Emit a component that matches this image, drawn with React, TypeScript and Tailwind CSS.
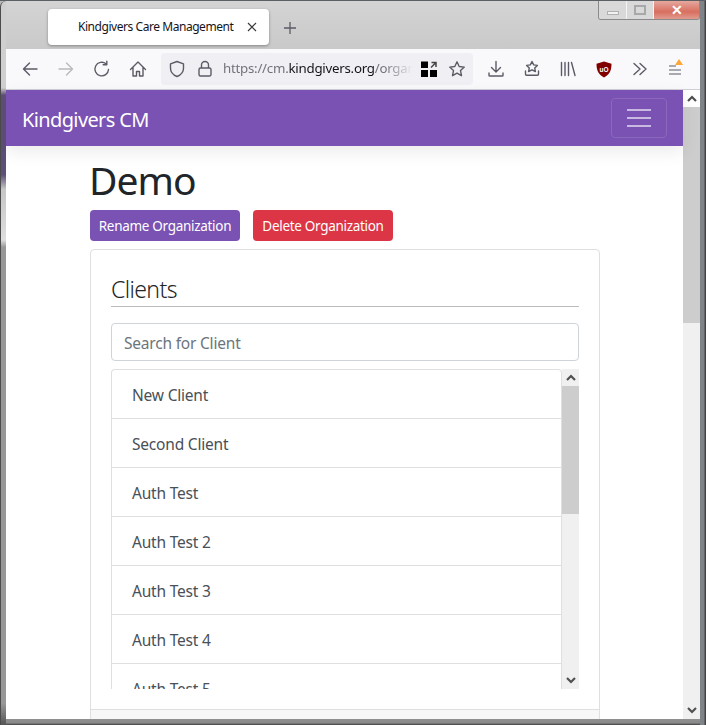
import React from "react";

const stroke = "#5b5b66";

function Ico({ children, w = 20, h = 20, vb = "0 0 20 20", c = "shrink-0" }: { children: React.ReactNode; w?: number; h?: number; vb?: string; c?: string }) {
  return (
    <svg width={w} height={h} viewBox={vb} fill="none" stroke={stroke} strokeWidth={1.4} strokeLinecap="round" strokeLinejoin="round" className={c}>
      {children}
    </svg>
  );
}

const names = ["New Client", "Second Client", "Auth Test", "Auth Test 2", "Auth Test 3", "Auth Test 4", "Auth Test 5"];

function ScrollArrow({ up }: { up: boolean }) {
  return (
    <svg width="10" height="7" viewBox="0 0 10 7" fill="none" stroke="#505050" strokeWidth={2.2}>
      <path d={up ? "M1 6 L5 2 L9 6" : "M1 1 L5 5 L9 1"} />
    </svg>
  );
}

function Toolbar() {
  return (
    <div className="h-[41px] bg-[#f9f9fb] border-b border-[#cfcfd8] flex items-center relative shrink-0">
      <div className="w-[155px] shrink-0 flex items-center">
        <div className="w-[48px] flex justify-center">
          <Ico><path d="M17 10H3.500M9.500 4l-6 6 6 6" /></Ico>
        </div>
        <div className="w-[24px] flex justify-center">
          <Ico><g stroke="#b9b9bf"><path d="M3 10h13.500M10.500 4l6 6-6 6" /></g></Ico>
        </div>
        <div className="w-[48px] flex justify-center">
          <Ico><path d="M16.500 10.500A6.800 6.800 0 1 1 14 4.800M14.800 2.200v3.600h-3.600" /></Ico>
        </div>
        <div className="w-[24px] flex justify-center">
          <Ico><path d="M2.500 10.500 10 3l7.500 7.500M5 8.500V17h3.500v-4.500h3V17H15V8.500" /></Ico>
        </div>
      </div>
      <div className="w-[312px] h-[32px] bg-[#f0f0f4] rounded flex items-center shrink-0 pl-[7px]">
        <Ico w={18} h={18} vb="0 0 18 18"><path d="M9 1.500 2.500 3.800v4.400c0 4 3 6.800 6.500 8.300 3.500-1.500 6.500-4.300 6.500-8.300V3.800L9 1.500Z" /></Ico>
        <Ico w={16} h={18} vb="0 0 16 18" c="ml-[11px] shrink-0"><path d="M4.500 8V5a3.500 3.500 0 0 1 7 0v3M3.500 8h9a1.500 1.500 0 0 1 1.500 1.500v5a1.500 1.500 0 0 1-1.500 1.500h-9A1.500 1.500 0 0 1 2 14.500v-5A1.500 1.500 0 0 1 3.500 8Z" /></Ico>
        <div className="ml-[10px] w-[190px] overflow-hidden whitespace-nowrap text-[13.300px] text-[#72727c] shrink-0 tracking-[-0.25px] [mask-image:linear-gradient(90deg,#000_85%,transparent)]">
          https://cm.<span className="text-[#15141a]">kindgivers.org</span>/organization
        </div>
        <svg width="16" height="16" viewBox="0 0 16 16" className="ml-[8px] shrink-0">
          <rect x="0" y="0.500" width="7" height="6.500" fill="#000" />
          <rect x="0" y="9" width="7" height="7" fill="#000" />
          <rect x="9" y="9" width="7" height="7" fill="#000" />
          <path d="M10 6.500 15 1.500M10.500 1.500H15V6" stroke="#444" strokeWidth="1.500" fill="none" />
        </svg>
        <Ico w={18} h={18} vb="0 0 18 18" c="ml-[11px] shrink-0"><path d="m9 1.800 2.200 4.700 5.100.6-3.800 3.500 1 5.100L9 13.200l-4.500 2.500 1-5.100-3.800-3.500 5.100-.6L9 1.800Z" /></Ico>
      </div>
      <div className="flex items-center pl-[14px] shrink-0">
        <div className="w-[36px]">
          <Ico w={18} h={18} vb="0 0 18 18"><path d="M9 1.500V11.500M4.500 7.500 9 12l4.500-4.500M2 13v2.200A.800.800 0 0 0 2.800 16h12.400a.800.800 0 0 0 .800-.800V13" /></Ico>
        </div>
        <div className="w-[36px]">
          <Ico w={18} h={18} vb="0 0 18 18"><path d="m9 1.500 1.700 3.400 3.700.500-2.700 2.500.700 3.600L9 9.800l-3.400 1.700.700-3.600L3.600 5.400l3.700-.500L9 1.500ZM2.500 11v3.200a1 1 0 0 0 1 1h11a1 1 0 0 0 1-1V11" /></Ico>
        </div>
        <div className="w-[37px]">
          <Ico w={18} h={18} vb="0 0 18 18"><path d="M2.500 2.500v13M6 2.500v13M9.500 2.500v13M12.500 2.500l3.500 13" /></Ico>
        </div>
        <div className="w-[36px]">
          <svg width="16" height="17" viewBox="0 0 16 17">
            <path d="M8 .500 15.500 2.700c0 6.500-1.800 10.800-7.500 13.800C2.300 13.500.500 9.200.500 2.700L8 .500Z" fill="#800000" />
            <text x="8" y="10.500" fontSize="6.500" fill="#fff" textAnchor="middle" fontFamily="Liberation Sans, sans-serif" fontWeight="700">uO</text>
          </svg>
        </div>
        <div className="w-[36px]">
          <Ico w={16} h={16} vb="0 0 16 16"><path d="M2 2.500 8 8l-6 5.500M8 2.500 14 8l-6 5.500" /></Ico>
        </div>
        <div className="relative w-[18px] h-[18px] -mt-[2px]">
          <svg width="14" height="12" viewBox="0 0 14 12" stroke={stroke} strokeWidth="1.100" className="absolute left-0 top-[6px]"><path d="M1 1h7M1 5h12M1 9h12" /></svg>
          <svg width="8" height="6" viewBox="0 0 8 6" className="absolute left-[7px] top-0"><path d="M4 0 8 6H0Z" fill="#ffa436" /></svg>
        </div>
      </div>
    </div>
  );
}

export default function App() {
  return (
    <div className="w-[706px] h-[725px] overflow-hidden relative bg-[linear-gradient(90deg,#b9b9b9,#d6d6d6_40%,#d6d6d6_60%,#b9b9b9)] border-t border-[#5c6064] flex font-['Noto_Sans',sans-serif]">
      {/* left frame */}
      <div className="w-[6px] shrink-0 bg-[linear-gradient(180deg,#cfcfcf_0,#cfcfcf_12%,#5e4f78_13%,#5e4f78_24%,#c6c6c6_26%,#dedede_33%,#979797_34%,#979797_97%,#555_100%)] border-l border-[#4c4c4c] rounded-tl-md" />
      <div className="w-[694px] shrink-0 flex flex-col">
        {/* tab strip */}
        <div className="h-[48px] shrink-0 flex items-start bg-[linear-gradient(180deg,#d4d4d4,#c9c9c9)]">
          <div className="ml-[42px] mt-[8px] w-[221px] h-[36px] bg-white rounded shadow-[0_1px_3px_rgba(0,0,0,0.35)] flex items-center pl-[30px] shrink-0">
            <span className="text-[12px] text-[#15141a] whitespace-nowrap tracking-[-0.45px] w-[169px]">Kindgivers Care Management</span>
            <svg width="10" height="10" viewBox="0 0 10 10" stroke="#3a3a3a" strokeWidth="1.200" className="shrink-0"><path d="M1 1l8 8M9 1l-8 8" /></svg>
          </div>
          <svg width="14" height="14" viewBox="0 0 14 14" stroke="#5b5b66" strokeWidth="1.300" className="ml-[14px] mt-[20px] shrink-0"><path d="M7 1v12M1 7h12" /></svg>
        </div>
        <Toolbar />
        {/* content */}
        <div className="flex-1 flex min-h-0">
          <div className="w-[677px] shrink-0 flex flex-col">
            <div className="h-[56px] shrink-0 bg-[#7952b3] flex items-center justify-between px-[16px] shadow-[0_6px_16px_rgba(0,0,0,0.08)] relative">
              <span className="text-[20px] text-white tracking-[-0.63px] pt-[3px]">Kindgivers CM</span>
              <div className="w-[56px] h-[40px] rounded border border-[#8a68bb] flex flex-col items-center justify-center gap-[6px]">
                <div className="w-[24px] h-[2px] bg-[#c9b8e1]" />
                <div className="w-[24px] h-[2px] bg-[#c9b8e1]" />
                <div className="w-[24px] h-[2px] bg-[#c9b8e1]" />
              </div>
            </div>
            <div className="flex-1 bg-white pl-[84px] min-h-0 overflow-hidden">
              <h1 className="text-[39px] leading-[48px] mt-[10px] -ml-px text-[#212529] tracking-[-1px]">Demo</h1>
              <div className="flex gap-[13px] mt-[6px]">
                <button className="h-[31px] w-[150px] pt-[2px] rounded bg-[#7952b3] text-white text-[13.500px] tracking-[-0.3px]">Rename Organization</button>
                <button className="h-[31px] w-[140px] pt-[2px] rounded bg-[#dc3545] text-white text-[13.500px] tracking-[-0.3px]">Delete Organization</button>
              </div>
              <div className="mt-[8px] w-[510px] border border-[#dfdfdf] rounded h-[600px] px-[20px] pt-[20px]">
                <div className="h-[37px] border-b border-[#bdbdbd] text-[23px] leading-[38px] font-light text-[#212529] tracking-[-0.6px]">Clients</div>
                <div className="mt-[16px] h-[38px] border border-[#ced4da] rounded pl-[12px] pt-[4px] flex items-center text-[15.500px] text-[#6c757d] tracking-[-0.2px]">Search for Client</div>
                <div className="mt-[8px] h-[320px] flex overflow-hidden">
                  <div className="flex-1 min-w-0 border-l border-t border-r border-[#dfdfdf] rounded-t">
                    {names.map((n) => (
                      <div key={n} className="h-[49px] shrink-0 border-b border-[#dfdfdf] pl-[20px] pt-[4px] flex items-center text-[15.500px] text-[#495057] tracking-[-0.2px]">{n}</div>
                    ))}
                  </div>
                  <div className="w-[17px] shrink-0 bg-[#f0f0f0] flex flex-col">
                    <div className="h-[17px] flex items-center justify-center"><ScrollArrow up /></div>
                    <div className="h-[128px] bg-[#cdcdcd]" />
                    <div className="flex-1" />
                    <div className="h-[17px] flex items-center justify-center"><ScrollArrow up={false} /></div>
                  </div>
                </div>
                <div className="-mx-[20px] mt-[20px] h-[20px] border-t border-[#dfdfdf] bg-[#f7f7f7]" />
              </div>
            </div>
          </div>
          {/* page scrollbar */}
          <div className="w-[17px] shrink-0 bg-[#f0f0f0] flex flex-col">
            <div className="h-[17px] bg-white flex items-center justify-center"><ScrollArrow up /></div>
            <div className="h-[216px] bg-[#cdcdcd]" />
            <div className="flex-1" />
            <div className="h-[17px] flex items-center justify-center"><ScrollArrow up={false} /></div>
          </div>
        </div>
        <div className="h-[6px] shrink-0 bg-[linear-gradient(180deg,#909090,#8a8a8a_66%,#3e3e3e)]" />
      </div>
      <div className="flex-1 bg-[linear-gradient(90deg,#7f8489,#7f8489_60%,#333)]" />
      {/* caption buttons */}
      <div className="absolute top-0 left-[598px] w-[102px] h-[19px] flex border border-t-0 border-[#8a8a8a] rounded-b-[3px] overflow-hidden">
        <div className="w-[28px] bg-[#d9d9d9] border-r border-[#f5f5f5] flex items-end justify-center pb-[4px]"><div className="w-[12px] h-[4px] bg-[#f2f2f2] border border-[#b0b0b0]" /></div>
        <div className="w-[27px] bg-[#d9d9d9] border-r border-[#f5f5f5] flex items-center justify-center"><div className="w-[12px] h-[10px] border-2 border-[#a8a8a8]" /></div>
        <div className="flex-1 bg-[linear-gradient(180deg,#e5a89e,#d86f60_60%,#e09a8e)] flex items-center justify-center text-white text-[14px] font-bold leading-none">✕</div>
      </div>
    </div>
  );
}
